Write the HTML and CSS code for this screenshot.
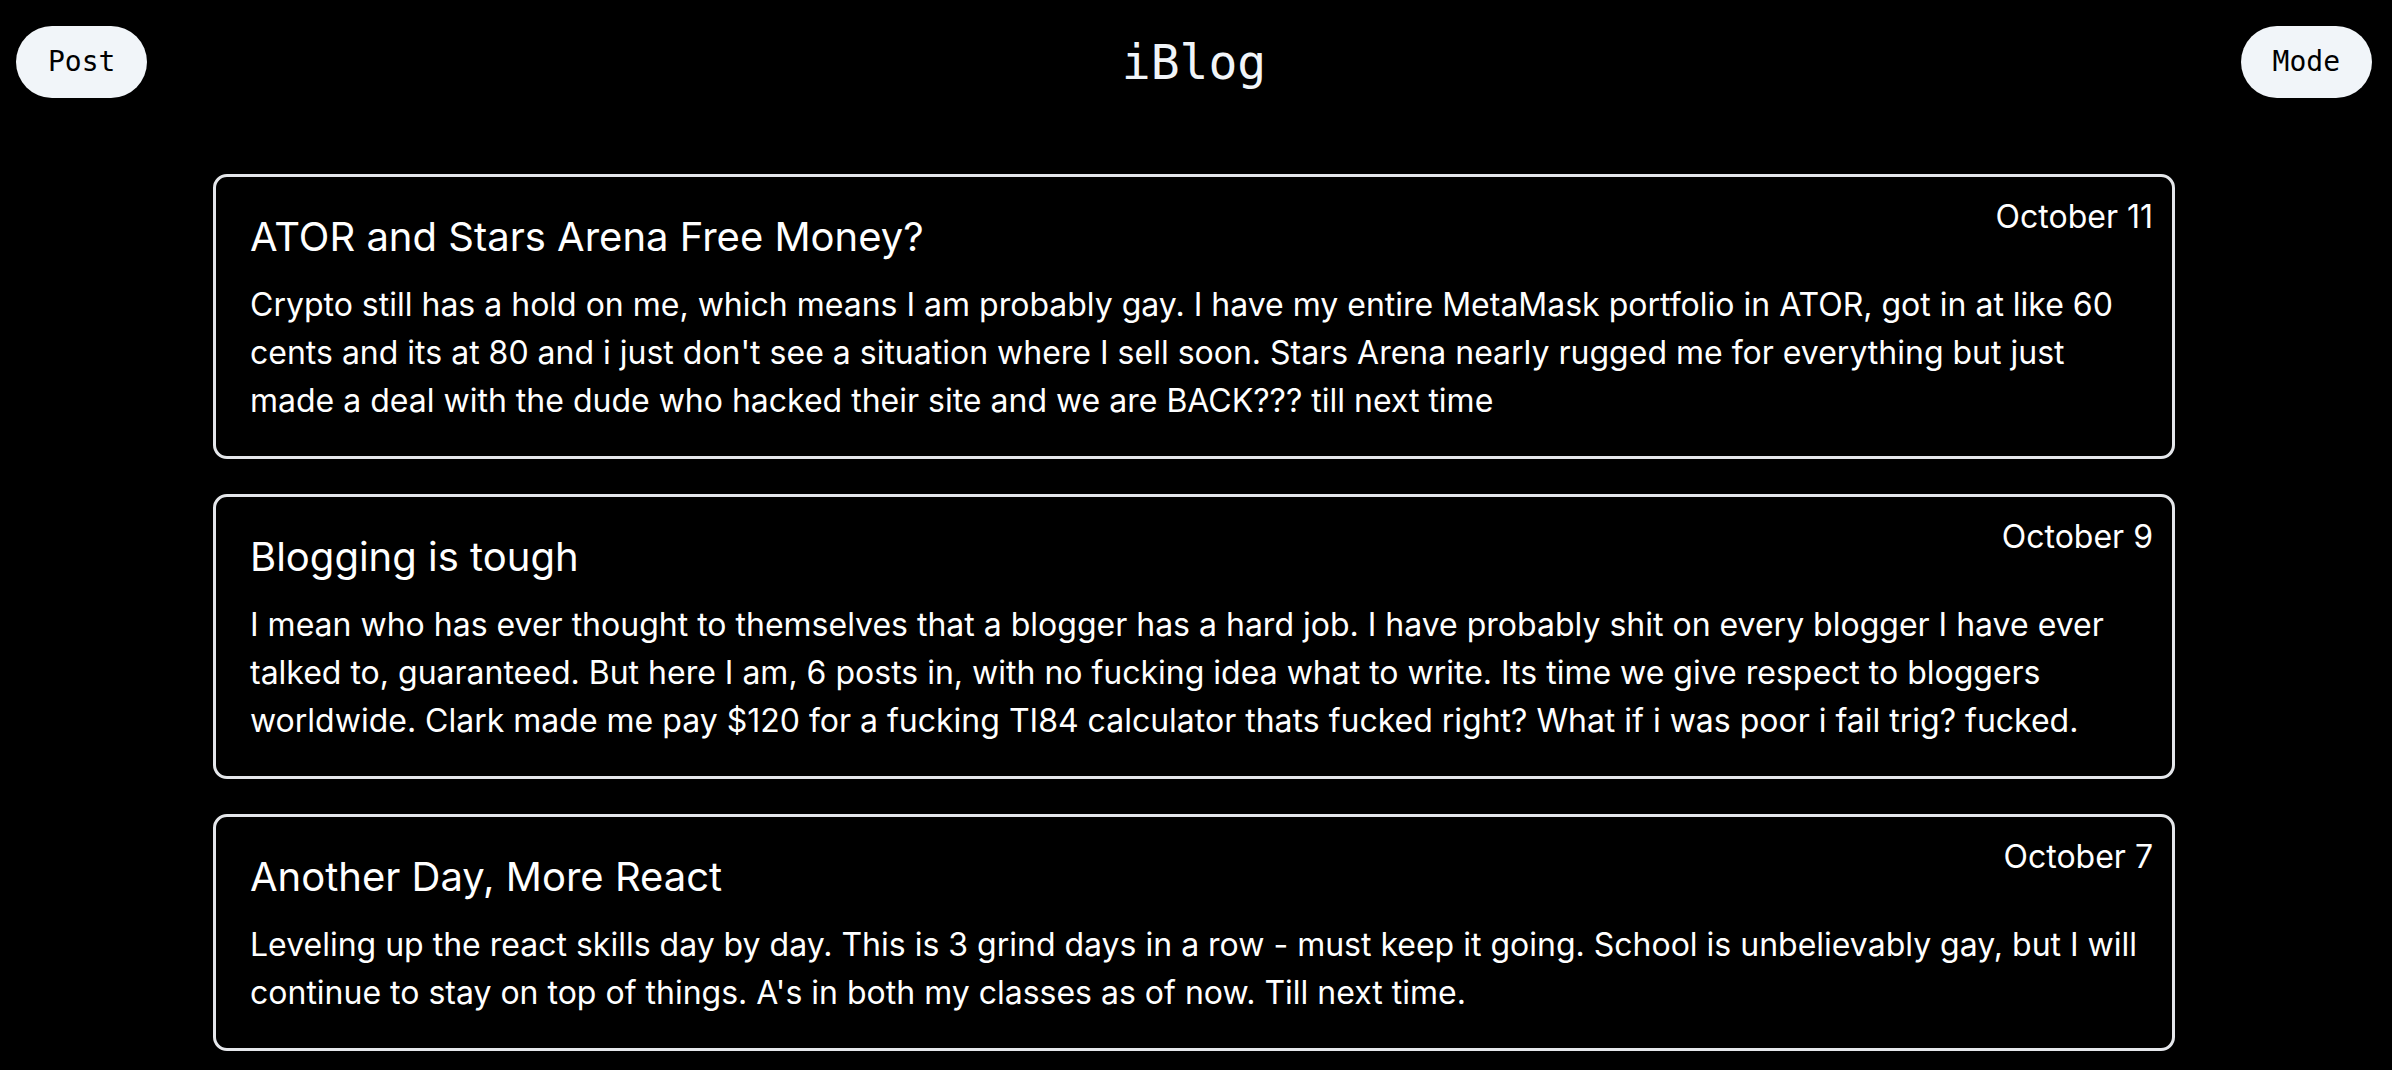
FILE: index.html
```html
<!DOCTYPE html>
<html lang="en">
<head>
<meta charset="utf-8">
<title>iBlog</title>
<link rel="stylesheet" href="styles.css">
</head>
<body>
<header class="topbar">
  <button class="pill">Post</button>
  <h1 class="brand">iBlog</h1>
  <button class="pill">Mode</button>
</header>
<main class="feed">
  <article class="card">
    <span class="date">October 11</span>
    <h2 class="title">ATOR and Stars Arena Free Money?</h2>
    <p class="text">Crypto still has a hold on me, which means I am probably gay. I have my entire MetaMask portfolio in ATOR, got in at like 60 cents and its at 80 and i just don't see a situation where I sell soon. Stars Arena nearly rugged me for everything but just made a deal with the dude who hacked their site and we are BACK??? till next time</p>
  </article>
  <article class="card">
    <span class="date">October 9</span>
    <h2 class="title">Blogging is tough</h2>
    <p class="text">I mean who has ever thought to themselves that a blogger has a hard job. I have probably shit on every blogger I have ever talked to, guaranteed. But here I am, 6 posts in, with no fucking idea what to write. Its time we give respect to bloggers worldwide. Clark made me pay $120 for a fucking TI84 calculator thats fucked right? What if i was poor i fail trig? fucked.</p>
  </article>
  <article class="card">
    <span class="date">October 7</span>
    <h2 class="title">Another Day, More React</h2>
    <p class="text">Leveling up the react skills day by day. This is 3 grind days in a row - must keep it going. School is unbelievably gay, but I will continue to stay on top of things. A's in both my classes as of now. Till next time.</p>
  </article>
</main>
</body>
</html>
```

FILE: styles.css
```css
* { box-sizing: border-box; }
html, body { margin: 0; padding: 0; background: #000; }
body {
  color: #fff;
  font-family: Inter, "Noto Sans", sans-serif;
  height: 1070px;
  overflow: hidden;
}
.topbar {
  display: flex;
  align-items: center;
  justify-content: space-between;
  padding: 26px 20px 0 16px;
}
.pill {
  height: 72px;
  padding: 0 32px;
  border: 0;
  border-radius: 36px;
  background: #f1f5f9;
  color: #000;
  font-family: "DejaVu Sans Mono", monospace;
  font-size: 28px;
  line-height: 1;
  cursor: pointer;
}
.brand {
  margin: 0;
  font-family: "DejaVu Sans Mono", monospace;
  font-weight: normal;
  font-size: 48px;
  color: #f1f5f9;
  line-height: 72px;
}
.feed {
  display: flex;
  flex-direction: column;
  gap: 35px;
  margin: 76px 0 0 213px;
  width: 1962px;
}
.card {
  position: relative;
  border: 3px solid #e5e7eb;
  border-radius: 14px;
  padding: 38px 34px 31px 34px;
}
.date {
  position: absolute;
  top: 16px;
  right: 19px;
  font-size: 32px;
  line-height: 48px;
}
.title {
  margin: 0 0 22px 0;
  font-weight: normal;
  font-size: 40px;
  line-height: 44px;
}
.text {
  margin: 0;
  font-size: 32px;
  line-height: 48px;
}
```
